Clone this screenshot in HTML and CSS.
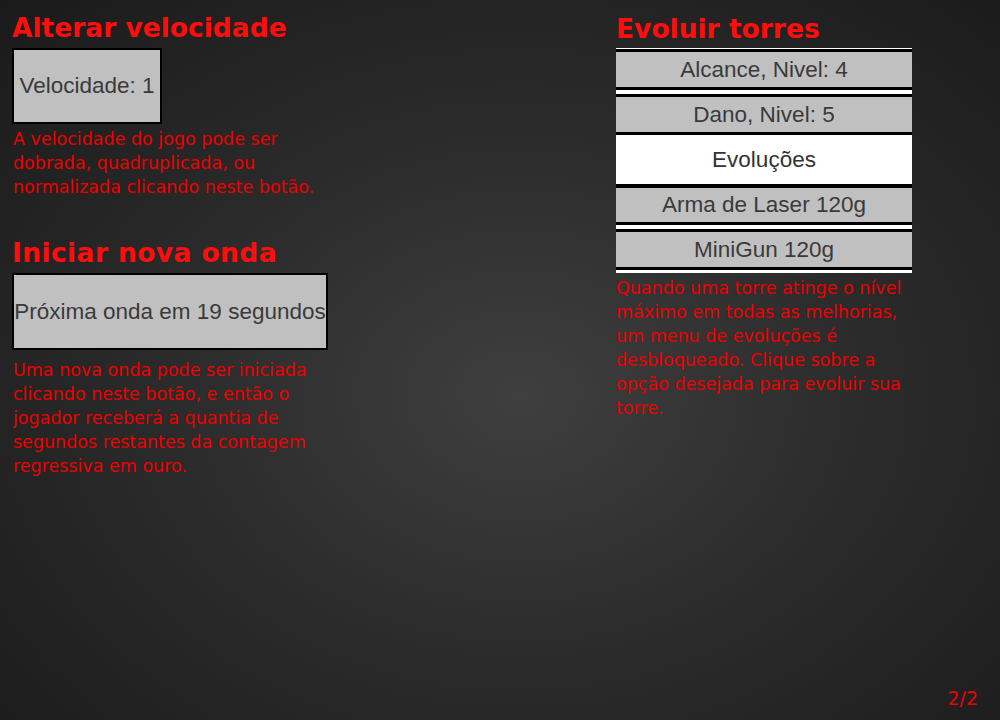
FILE: index.html
```html
<!DOCTYPE html>
<html lang="pt">
<head>
<meta charset="utf-8">
<title>Ajuda 2/2</title>
<link rel="stylesheet" href="styles.css">
</head>
<body>
<div class="page">
  <div class="columns">
    <section class="col col-left">
      <h2 class="title">Alterar velocidade</h2>
      <div class="game-btn speed-btn">Velocidade: 1</div>
      <p class="desc desc-speed">A velocidade do jogo pode ser dobrada, quadruplicada, ou normalizada clicando neste botão.</p>
      <h2 class="title title-wave">Iniciar nova onda</h2>
      <div class="game-btn wave-btn">Próxima onda em 19 segundos</div>
      <p class="desc desc-wave">Uma nova onda pode ser iniciada clicando neste botão, e então o jogador receberá a quantia de segundos restantes da contagem regressiva em ouro.</p>
    </section>
    <section class="col col-right">
      <h2 class="title title-evolve">Evoluir torres</h2>
      <div class="menu">
        <div class="menu-item">Alcance, Nivel: 4</div>
        <div class="menu-item">Dano, Nivel: 5</div>
        <div class="menu-header">Evoluções</div>
        <div class="menu-item">Arma de Laser 120g</div>
        <div class="menu-item">MiniGun 120g</div>
      </div>
      <p class="desc desc-evolve">Quando uma torre atinge o nível máximo em todas as melhorias, um menu de evoluções é desbloqueado. Clique sobre a opção desejada para evoluir sua torre.</p>
    </section>
  </div>
  <footer class="pager">2/2</footer>
</div>
</body>
</html>
```

FILE: styles.css
```css
html, body {
  margin: 0;
  padding: 0;
  height: 100%;
}

body {
  background: radial-gradient(ellipse farthest-corner at 52% 55%, #3f3f3f 0%, #2c2c2c 45%, #1a1a1a 100%);
  font-family: "DejaVu Sans", sans-serif;
  color: #f00;
  overflow: hidden;
}

.page {
  height: 720px;
  display: flex;
  flex-direction: column;
  box-sizing: border-box;
}

.columns {
  flex: 1;
  display: grid;
  grid-template-columns: 316px 296px;
  column-gap: 288px;
  padding-left: 12px;
  align-items: start;
}

.col {
  display: flex;
  flex-direction: column;
  align-items: flex-start;
}

.title {
  margin: 12px 0 0 0;
  font-family: "DejaVu Sans", sans-serif;
  font-weight: bold;
  font-size: 26.5px;
  line-height: 32px;
  color: #ff0d0d;
  white-space: nowrap;
}

.title-wave {
  margin-top: 38px;
  letter-spacing: 0.4px;
}

.title-evolve {
  margin-top: 13px;
}

.game-btn {
  box-sizing: border-box;
  height: 76px;
  border: 2px solid #000;
  background: #c0c0c0;
  color: #3a3a3a;
  font-family: "Liberation Sans", Arial, sans-serif;
  font-size: 22.5px;
  display: flex;
  align-items: center;
  justify-content: center;
  white-space: nowrap;
  margin-top: 4px;
}

.speed-btn {
  width: 150px;
}

.wave-btn {
  width: 316px;
  height: 77px;
  margin-top: 4px;
}

.desc {
  margin: 0;
  font-size: 17.5px;
  line-height: 24px;
  color: #ec0000;
  padding-left: 1px;
}

.desc-speed {
  margin-top: 3px;
}

.desc-wave {
  margin-top: 8px;
}

.menu {
  margin-top: 3px;
  width: 296px;
  background: #fff;
  padding: 1px 0 3px 0;
  display: flex;
  flex-direction: column;
}

.menu-item {
  height: 35px;
  border-top: 3px solid #000;
  border-bottom: 3px solid #000;
  background: #c0c0c0;
  color: #3a3a3a;
  font-family: "Liberation Sans", Arial, sans-serif;
  font-size: 22.5px;
  display: flex;
  align-items: center;
  justify-content: center;
}

.menu-item + .menu-item {
  margin-top: 4px;
}

.menu-header {
  height: 49px;
  background: #fff;
  color: #333;
  font-family: "Liberation Sans", Arial, sans-serif;
  font-size: 22.5px;
  display: flex;
  align-items: center;
  justify-content: center;
}

.menu-header + .menu-item {
  border-top-width: 4px;
  height: 34px;
}

.desc-evolve {
  margin-top: 3px;
  padding-left: 0;
}

.pager {
  align-self: flex-end;
  padding: 0 22px 10px 0;
  font-size: 19px;
  line-height: 24px;
  color: #ec0000;
}
```
